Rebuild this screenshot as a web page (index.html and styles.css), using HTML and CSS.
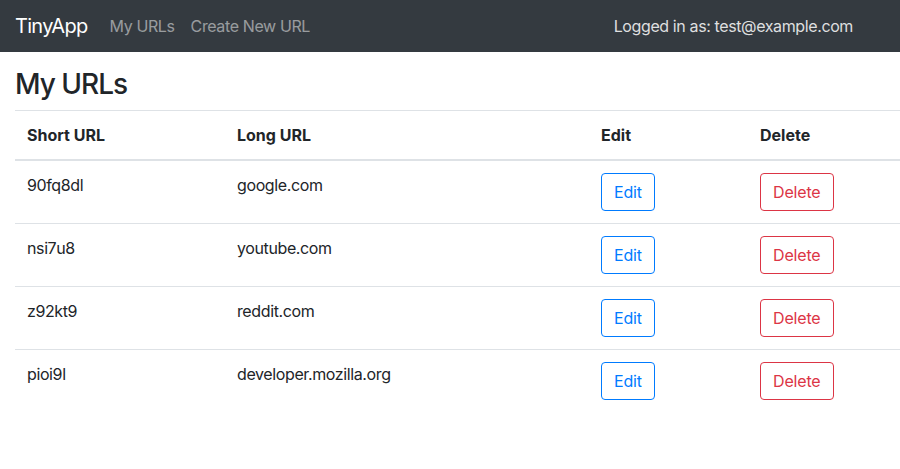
FILE: index.html
```html
<!DOCTYPE html>
<html>
<head>
<meta charset="utf-8">
<link rel="stylesheet" href="styles.css">
</head>
<body>
<nav class="navbar">
  <a class="brand" href="#">TinyApp</a>
  <a class="nav-link" href="#">My URLs</a>
  <a class="nav-link" href="#">Create New URL</a>
  <span class="user">Logged in as: test@example.com</span>
</nav>
<main class="page">
  <h3 class="title">My URLs</h3>
  <table class="urls">
    <thead>
      <tr>
        <th class="c1">Short URL</th>
        <th class="c2">Long URL</th>
        <th class="c3">Edit</th>
        <th class="c4">Delete</th>
      </tr>
    </thead>
    <tbody>
      <tr><td>90fq8dl</td><td>google.com</td><td><button class="btn btn-edit">Edit</button></td><td><button class="btn btn-del">Delete</button></td></tr>
      <tr><td>nsi7u8</td><td>youtube.com</td><td><button class="btn btn-edit">Edit</button></td><td><button class="btn btn-del">Delete</button></td></tr>
      <tr><td>z92kt9</td><td>reddit.com</td><td><button class="btn btn-edit">Edit</button></td><td><button class="btn btn-del">Delete</button></td></tr>
      <tr><td>pioi9l</td><td>developer.mozilla.org</td><td><button class="btn btn-edit">Edit</button></td><td><button class="btn btn-del">Delete</button></td></tr>
    </tbody>
  </table>
</main>
</body>
</html>
```
FILE: styles.css
```css
* { box-sizing: border-box; }
body {
  margin: 0;
  font-family: Inter, "Liberation Sans", sans-serif;
  font-size: 16px;
  line-height: 1.5;
  color: #212529;
  background: #fff;
  letter-spacing: -0.024em;
}
.navbar {
  display: flex;
  align-items: center;
  height: 52px;
  padding: 8px 16px;
  background: #343a40;
}
.brand {
  color: #fff;
  font-size: 20px;
  text-decoration: none;
  margin-right: 14px;
  margin-left: -1px;
  letter-spacing: -0.035em;
}
.nav-link {
  color: rgba(255,255,255,.5);
  text-decoration: none;
  padding: 0 8px;
}
.user {
  margin-left: auto;
  margin-right: 31px;
  color: rgba(255,255,255,.85);
}
.page {
  padding: 16px 0 0 15px;
}
.title {
  margin: 0 0 8px;
  font-size: 28px;
  font-weight: 500;
  line-height: 1.2;
  letter-spacing: -0.036em;
}
.urls {
  width: 885px;
  border-collapse: collapse;
}
.urls th, .urls td {
  padding: 12px;
  text-align: left;
  vertical-align: top;
  border-top: 1px solid #dee2e6;
}
.urls th {
  font-weight: 700;
  letter-spacing: 0;
  border-bottom: 2px solid #dee2e6;
}
.c1 { width: 210px; }
.c2 { width: 364px; }
.c3 { width: 159px; }
.c4 { width: 152px; }
.btn {
  font-family: inherit;
  font-size: 16px;
  line-height: 1.5;
  letter-spacing: -0.01em;
  padding: 6px 12px;
  border-radius: 4px;
  background: transparent;
  border: 1px solid;
}
.btn-edit { color: #007bff; border-color: #007bff; }
.btn-del { color: #dc3545; border-color: #dc3545; }
```
